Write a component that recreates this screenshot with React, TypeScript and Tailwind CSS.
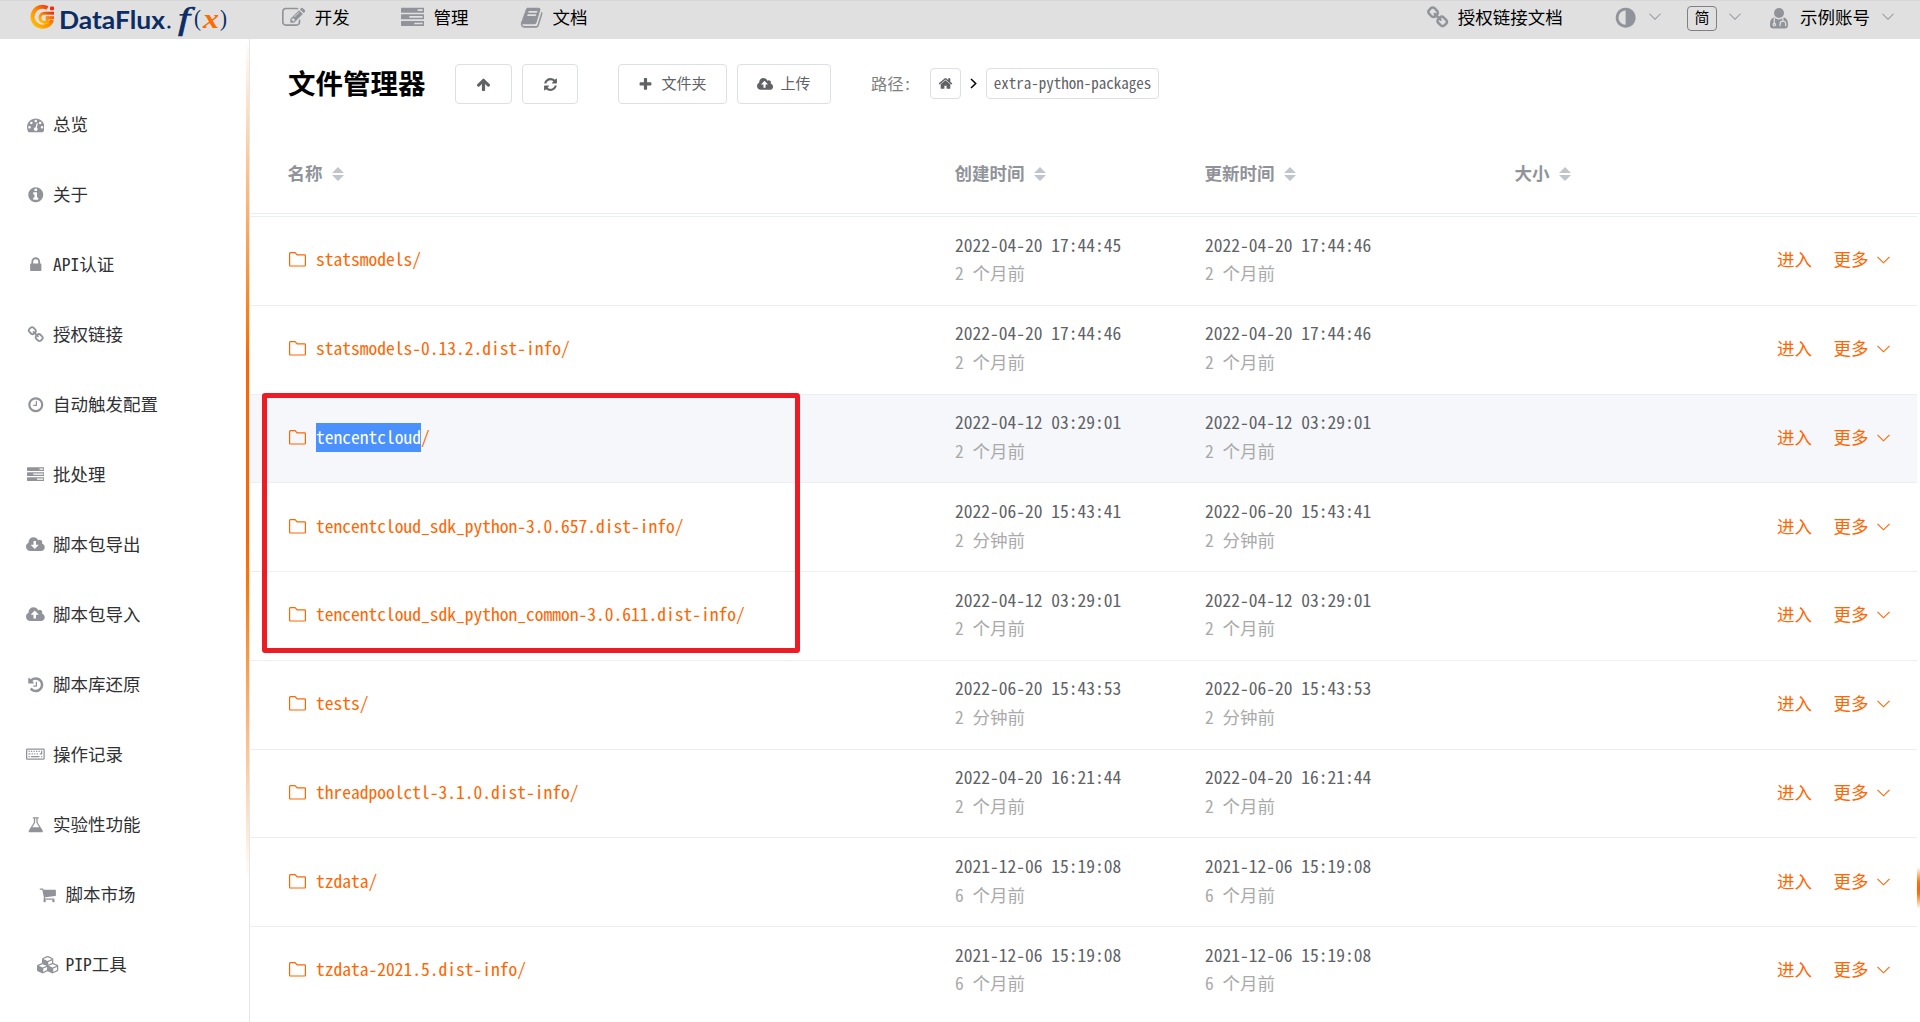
import React from "react";

const CIRCLE =
  "M1664 896q0 209-103 385.5t-279.5 279.5-385.5 103-385.5-103-279.5-279.5-103-385.5 103-385.5 279.5-279.5 385.5-103 385.5 103 279.5 279.5 103 385.5z";
const CLOUD =
  "M1920 1152q0 159-112.5 271.5t-271.5 112.5h-1088q-185 0-316.5-131.5t-131.5-316.5q0-130 70-240t188-165q-2-30-2-43 0-212 150-362t362-150q156 0 285.5 87t188.5 231q71-62 166-62 106 0 181 75t75 181q0 76-41 138 130 31 213.5 135.5t83.5 238.5z";

type Glyph = { w: number; d: string };

const GLYPHS = {
  dashboard: {
    w: 1792,
    d: "M384 1152q0-53-37.5-90.5t-90.5-37.5-90.5 37.5-37.5 90.5 37.5 90.5 90.5 37.5 90.5-37.5 37.5-90.5zm192-448q0-53-37.5-90.5t-90.5-37.5-90.5 37.5-37.5 90.5 37.5 90.5 90.5 37.5 90.5-37.5 37.5-90.5zm428 481l101-382q6-26-7.5-48.5t-38.5-29.5-48 6.5-30 39.5l-101 382q-60 5-107 43.5t-63 98.5q-20 77 20 146t117 89 146-20 89-117q16-60-6-117t-72-91zm660-33q0-53-37.5-90.5t-90.5-37.5-90.5 37.5-37.5 90.5 37.5 90.5 90.5 37.5 90.5-37.5 37.5-90.5zm-640-640q0-53-37.5-90.5t-90.5-37.5-90.5 37.5-37.5 90.5 37.5 90.5 90.5 37.5 90.5-37.5 37.5-90.5zm448 192q0-53-37.5-90.5t-90.5-37.5-90.5 37.5-37.5 90.5 37.5 90.5 90.5 37.5 90.5-37.5 37.5-90.5zm320 448q0 261-141 483-19 29-54 29h-1402q-35 0-54-29-141-221-141-483 0-182 71-348t191-286 286-191 348-71 348 71 286 191 191 286 71 348z",
  },
  info: {
    w: 1792,
    d:
      "M1152 1376v-160q0-14-9-23t-23-9h-96v-512q0-14-9-23t-23-9h-320q-14 0-23 9t-9 23v160q0 14 9 23t23 9h96v320h-96q-14 0-23 9t-9 23v160q0 14 9 23t23 9h448q14 0 23-9t9-23zm-128-896v-160q0-14-9-23t-23-9h-192q-14 0-23 9t-9 23v160q0 14 9 23t23 9h192q14 0 23-9t9-23z" +
      CIRCLE,
  },
  lock: {
    w: 1792,
    d: "M640 768h512v-192q0-106-75-181t-181-75-181 75-75 181v192zm832 96v576q0 40-28 68t-68 28h-960q-40 0-68-28t-28-68v-576q0-40 28-68t68-28h32v-192q0-184 132-316t316-132 316 132 132 316v192h32q40 0 68 28t28 68z",
  },
  link: {
    w: 1792,
    d: "M1520 1216q0-40-28-68l-208-208q-28-28-68-28-42 0-72 32 3 3 19 18.5t21.5 21.5 15 19 13 25.5 3.5 27.5q0 40-28 68t-68 28q-15 0-27.5-3.5t-25.5-13-19-15-21.5-21.5-18.5-19q-33 31-33 73 0 40 28 68l206 207q27 27 68 27 40 0 68-26l147-146q28-28 28-67zm-703-705q0-40-28-68l-206-207q-28-28-68-28-39 0-68 27l-147 146q-28 28-28 67 0 40 28 68l208 208q27 27 68 27 42 0 72-31-3-3-19-18.5t-21.5-21.5-15-19-13-25.5-3.5-27.5q0-40 28-68t68-28q15 0 27.5 3.5t25.5 13 19 15 21.5 21.5 18.5 19q33-31 33-73zm895 705q0 120-85 203l-147 146q-83 83-203 83-121 0-204-85l-206-207q-83-83-83-203 0-123 88-209l-88-88q-86 88-208 88-120 0-204-84l-208-208q-84-84-84-204t85-203l147-146q83-83 203-83 121 0 204 85l206 207q83 83 83 203 0 123-88 209l88 88q86-88 208-88 120 0 204 84l208 208q84 84 84 204z",
  },
  clock: {
    w: 1792,
    d: "M1024 544v448q0 14-9 23t-23 9h-320q-14 0-23-9t-9-23v-64q0-14 9-23t23-9h224v-352q0-14 9-23t23-9h64q14 0 23 9t9 23zm416 352q0-148-73-273t-198-198-273-73-273 73-198 198-73 273 73 273 198 198 273 73 273-73 198-198 73-273zm224 0q0 209-103 385.5t-279.5 279.5-385.5 103-385.5-103-279.5-279.5-103-385.5 103-385.5 279.5-279.5 385.5-103 385.5 103 279.5 279.5 103 385.5z",
  },
  adjust: {
    w: 1792,
    d: "M896 1440v-1088q-148 0-273 73t-198 198-73 273 73 273 198 198 273 73z" + CIRCLE,
  },
  tasks: {
    w: 1792,
    d: "M1024 1408h640v-128h-640v128zm-384-512h1024v-128h-1024v128zm640-512h384v-128h-384v128zm512 832v256q0 26-19 45t-45 19h-1664q-26 0-45-19t-19-45v-256q0-26 19-45t45-19h1664q26 0 45 19t19 45zm0-512v256q0 26-19 45t-45 19h-1664q-26 0-45-19t-19-45v-256q0-26 19-45t45-19h1664q26 0 45 19t19 45zm0-512v256q0 26-19 45t-45 19h-1664q-26 0-45-19t-19-45v-256q0-26 19-45t45-19h1664q26 0 45 19t19 45z",
  },
  cloudDown: {
    w: 1920,
    d:
      "M1280 928q0-14-9-23t-23-9h-224v-352q0-13-9.5-22.5t-22.5-9.5h-192q-13 0-22.5 9.5t-9.5 22.5v352h-224q-13 0-22.5 9.5t-9.5 22.5q0 14 9 23l352 352q9 9 23 9t23-9l351-351q10-12 10-24z" +
      CLOUD,
  },
  cloudUp: {
    w: 1920,
    d:
      "M1280 864q0-14-9-23l-352-352q-9-9-23-9t-23 9l-351 351q-10 12-10 24 0 14 9 23t23 9h224v352q0 13 9.5 22.5t22.5 9.5h192q13 0 22.5-9.5t9.5-22.5v-352h224q13 0 22.5-9.5t9.5-22.5z" +
      CLOUD,
  },
  history: {
    w: 1792,
    d: "M1664 896q0 156-61 298t-164 245-245 164-298 61q-172 0-327-72.5t-264-204.5q-7-10-6.5-22.5t8.5-20.5l137-138q10-9 25-9 16 2 23 12 73 95 179 147t225 52q104 0 198.5-40.5t163.5-109.5 109.5-163.5 40.5-198.5-40.5-198.5-109.5-163.5-163.5-109.5-198.5-40.5q-98 0-188 35.5t-160 101.5l137 138q31 30 14 69-17 40-59 40h-448q-26 0-45-19t-19-45v-448q0-42 40-59 39-17 69 14l130 129q107-101 244.5-156.5t284.5-55.5q156 0 298 61t245 164 164 245 61 298zm-640-288v448q0 14-9 23t-23 9h-320q-14 0-23-9t-9-23v-64q0-14 9-23t23-9h224v-352q0-14 9-23t23-9h64q14 0 23 9t9 23z",
  },
  keyboard: {
    w: 1920,
    d: "M128 256h1664q128 0 128 128v896q0 128-128 128h-1664q-128 0-128-128v-896q0-128 128-128zm0 128v896h1664v-896zM256 480h128v128h-128zM512 480h128v128h-128zM768 480h128v128h-128zM1024 480h128v128h-128zM1280 480h128v128h-128zM1536 480h128v384h-256v-128h128zM256 736h192v128h-192zM576 736h128v128h-128zM832 736h128v128h-128zM1088 736h128v128h-128zM256 1024h128v128h-128zM512 1024h864v128h-864zM1536 1024h128v128h-128z",
  },
  flask: {
    w: 1792,
    d: "M1591 1448q56 89 21.5 152.5t-140.5 63.5h-1152q-106 0-140.5-63.5t21.5-152.5l503-793v-399h-64q-26 0-45-19t-19-45 19-45 45-19h512q26 0 45 19t19 45-19 45-45 19h-64v399zm-779-725l-272 429h712l-272-429-20-31v-436h-128v436z",
  },
  cart: {
    w: 1792,
    d: "M704 1536q0 52-38 90t-90 38-90-38-38-90 38-90 90-38 90 38 38 90zm896 0q0 52-38 90t-90 38-90-38-38-90 38-90 90-38 90 38 38 90zm128-1088v512q0 24-16.5 42.5t-40.5 21.5l-1044 122q13 60 13 70 0 16-24 64h920q26 0 45 19t19 45-19 45-45 19h-1024q-26 0-45-19t-19-45q0-11 8-31.5t16-36 21.5-40 15.5-29.5l-177-823h-204q-26 0-45-19t-19-45 19-45 45-19h256q16 0 28.5 6.5t19.5 15.5 13 24.5 8 26 5.5 29.5 4.5 26h1201q26 0 45 19t19 45z",
  },
  cubes: {
    w: 2304,
    d: "M640 1632l384-192v-314l-384 164v342zm-64-454l404-173-404-173-404 173zm1088 454l384-192v-314l-384 164v342zm-64-454l404-173-404-173-404 173zm-448-293l384-165v-266l-384 164v267zm-64-379l441-189-441-189-441 189zm1088 518v416q0 36-19 67t-52 47l-448 224q-25 14-57 14t-57-14l-448-224q-4-2-7-4-2 2-7 4l-448 224q-25 14-57 14t-57-14l-448-224q-33-16-52-47t-19-67v-416q0-38 21.5-70t56.5-48l434-186v-400q0-38 21.5-70t56.5-48l448-192q23-10 50-10t50 10l448 192q35 16 56.5 48t21.5 70v400l434 186q36 16 57 48t21 70z",
  },
  edit: {
    w: 1792,
    d: "M888 1184l116-116-152-152-116 116v56h96v96h56zm440-720q-16-16-33 1l-350 350q-17 17-1 33t33-1l350-350q17-17 1-33zm80 594v190q0 119-84.5 203.5t-203.5 84.5h-832q-119 0-203.5-84.5t-84.5-203.5v-832q0-119 84.5-203.5t203.5-84.5h832q63 0 117 25 15 7 18 23 3 17-9 29l-49 49q-14 14-32 8-23-6-45-6h-832q-66 0-113 47t-47 113v832q0 66 47 113t113 47h832q66 0 113-47t47-113v-126q0-13 9-22l64-64q15-15 35-7t20 29zm-96-738l288 288-672 672h-288v-288zm444 132l-92 92-288-288 92-92q28-28 68-28t68 28l152 152q28 28 28 68t-28 68z",
  },
  book: {
    w: 1792,
    d: "M1703 478q40 57 18 129l-275 906q-19 64-76.5 107.5t-122.5 43.5h-923q-77 0-148.5-53.5t-99.5-131.5q-24-67-2-127 0-4 3-27t4-37q1-8-3-21.5t-3-19.5q2-11 8-21t16.5-23.5 16.5-23.5q23-38 45-91.5t30-91.5q3-10 .5-30t-.5-28q3-11 17-28t17-23q21-36 42-92t25-90q1-9-2.5-32t.5-28q4-13 22-30.5t22-22.5q19-26 42.5-84.5t27.5-96.5q1-8-3-25.5t-2-26.5q2-8 9-18t18-23 17-21q8-12 16.5-30.5t15-35 16-36 19.5-32 26.5-23.5 36-11.5 47.5 5.5l-1 3q38-9 51-9h761q74 0 114 56t18 130l-274 906q-36 119-71.5 153.5t-128.5 34.5h-869q-27 0-38 15-11 16-1 43 24 70 144 70h923q29 0 56-15.5t35-41.5l300-987q7-22 5-57 38 15 59 43zm-1064 2q-4 13 2 22.5t20 9.5h608q13 0 25.5-9.5t16.5-22.5l21-64q4-13-2-22.5t-20-9.5h-608q-13 0-25.5 9.5t-16.5 22.5zm-83 256q-4 13 2 22.5t20 9.5h608q13 0 25.5-9.5t16.5-22.5l21-64q4-13-2-22.5t-20-9.5h-608q-13 0-25.5 9.5t-16.5 22.5z",
  },
  arrowUp: {
    w: 1792,
    d: "M1675 971q0 51-37 90l-75 75q-38 38-91 38-54 0-90-38l-294-293v704q0 52-37.5 84.5t-90.5 32.5h-128q-53 0-90.5-32.5t-37.5-84.5v-704l-294 293q-36 38-90 38t-90-38l-75-75q-38-38-38-90 0-53 38-91l651-651q35-37 90-37 54 0 91 37l651 651q37 39 37 91z",
  },
  refresh: {
    w: 1792,
    d: "M1639 1056q0 5-1 7-64 268-268 434.5t-478 166.5q-146 0-282.5-55t-243.5-157l-129 129q-19 19-45 19t-45-19-19-45v-448q0-26 19-45t45-19h448q26 0 45 19t19 45-19 45l-137 137q71 66 161 102t187 36q134 0 250-65t186-179q11-17 53-117 8-23 30-23h192q13 0 22.5 9.5t9.5 22.5zm25-800v448q0 26-19 45t-45 19h-448q-26 0-45-19t-19-45 19-45l138-138q-148-137-349-137-134 0-250 65t-186 179q-11 17-53 117-8 23-30 23h-199q-13 0-22.5-9.5t-9.5-22.5v-7q65-268 270-434.5t480-166.5q146 0 284 55.5t245 156.5l130-129q19-19 45-19t45 19 19 45z",
  },
  plus: {
    w: 1792,
    d: "M1600 736v192q0 40-28 68t-68 28h-416v416q0 40-28 68t-68 28h-192q-40 0-68-28t-28-68v-416h-416q-40 0-68-28t-28-68v-192q0-40 28-68t68-28h416v-416q0-40 28-68t68-28h192q40 0 68 28t28 68v416h416q40 0 68 28t28 68z",
  },
  home: {
    w: 1792,
    d: "M1472 992v480q0 26-19 45t-45 19h-384v-384h-256v384h-384q-26 0-45-19t-19-45v-480q0-1 .5-3t.5-3l575-474 575 474q1 2 1 6zm223-69l-62 74q-8 9-21 11h-3q-13 0-21-7l-692-577-692 577q-12 8-24 7-13-2-21-11l-62-74q-8-10-7-23.5t11-21.5l719-599q32-26 76-26t76 26l244 204v-195q0-14 9-23t23-9h192q14 0 23 9t9 23v408l219 182q10 8 11 21.5t-7 23.5z",
  },
} satisfies Record<string, Glyph>;

type GlyphName = keyof typeof GLYPHS;

function Icon({ name, size, className = "" }: { name: GlyphName; size: number; className?: string }) {
  const g = GLYPHS[name];
  return (
    <svg
      viewBox={`0 0 ${g.w} 1792`}
      width={(size * g.w) / 1792}
      height={size}
      fill="currentColor"
      fillRule="evenodd"
      className={`shrink-0 ${className}`}
    >
      <path d={g.d} />
    </svg>
  );
}

function DoctorIcon() {
  return (
    <svg viewBox="0 0 18 21" width="18" height="21" className="shrink-0" fill="#909399">
      <circle cx="9" cy="5" r="5" />
      <path d="M4.3 9.6C1.5 10 0 12.6 0 16.4v1.4C0 19.600 1.200 20.500 3 20.500h12c1.800 0 3-.9 3-2.700v-1.400c0-3.800-1.500-6.400-4.300-6.800C12.500 10.700 10.900 11.400 9 11.400S5.500 10.700 4.300 9.600z" />
      <g fill="none" stroke="#e0e0e0" strokeWidth="1.200">
        <path d="M4.300 10v5.200" />
        <circle cx="4.300" cy="16.600" r="1.200" />
        <path d="M12.900 10v3.200M10.100 18.200v-2.300a2.800 2.800 0 0 1 5.600 0v2.300" />
      </g>
    </svg>
  );
}

function Chevron({ className = "", size = 13 }: { className?: string; size?: number }) {
  return (
    <svg viewBox="0 0 13 8" width={size} height={(size * 8) / 13} className={`shrink-0 ${className}`} fill="none" stroke="currentColor" strokeWidth="1.100">
      <path d="M.5 .8l6 6 6-6" />
    </svg>
  );
}

function FolderIcon() {
  return (
    <svg viewBox="0 0 17 15" width="17" height="15" className="mt-px ml-[0.500px] shrink-0" fill="none" stroke="currentColor" strokeWidth="1.200" strokeLinejoin="round">
      <path d="M.6 13.200V1.400q0-.8.8-.8h4.700l2 2.300h7.500q.8 0 .8.8v9.500q0 .8-.8.8H1.400q-.8 0-.8-.8z" />
    </svg>
  );
}

function SortIcon() {
  return (
    <svg viewBox="0 0 12 14" width="12" height="14" className="ml-[9px] shrink-0" fill="#c0c4cc">
      <path d="M6 0l6 6H0zM6 14l6-6H0z" />
    </svg>
  );
}

function Logo() {
  return (
    <svg viewBox="0 0 200 38" width="200" height="38" className="shrink-0">
      <defs>
        <linearGradient id="mark" x1="0" y1="1" x2="1" y2="0">
          <stop offset="0" stopColor="#ffc400" />
          <stop offset=".5" stopColor="#ff8a00" />
          <stop offset="1" stopColor="#ee2a10" />
        </linearGradient>
      </defs>
      <g fill="none" stroke="url(#mark)" strokeWidth="4">
        <path d="M17.500 7A10 10 0 1 0 22 19" />
        <path d="M24 12.200H14.500a4.600 4.600 0 0 0 0 9.200h2.700v-4.600H24" strokeWidth="3" />
      </g>
      <rect x="20" y="5.500" width="4" height="3.800" rx="1" fill="#ee2a10" />
      <g fill="#0b2d64">
        <text x="29" y="27.500" fontFamily="Lato, sans-serif" fontWeight="700" fontSize="25" textLength="106" lengthAdjust="spacingAndGlyphs">
          DataFlux
        </text>
        <circle cx="139" cy="26" r="1.600" />
        <text x="148" y="27.500" fontFamily="Liberation Serif, serif" fontStyle="italic" fontSize="32" stroke="#0b2d64" strokeWidth=".6" textLength="12" lengthAdjust="spacingAndGlyphs">
          f
        </text>
        <text x="164" y="25" fontFamily="Liberation Serif, serif" fontSize="24" textLength="7" lengthAdjust="spacingAndGlyphs">
          (
        </text>
        <text x="190" y="25" fontFamily="Liberation Serif, serif" fontSize="24" textLength="7" lengthAdjust="spacingAndGlyphs">
          )
        </text>
      </g>
      <text x="173" y="27" fontFamily="Liberation Serif, serif" fontStyle="italic" fontWeight="700" fontSize="27" fill="#ff6a00" textLength="16" lengthAdjust="spacingAndGlyphs">
        x
      </text>
    </svg>
  );
}

const NAV: { icon: GlyphName; label: string; left: string }[] = [
  { icon: "edit", label: "开发", left: "ml-px" },
  { icon: "tasks", label: "管理", left: "ml-[51px]" },
  { icon: "book", label: "文档", left: "ml-[51px]" },
];

const SIDE: { icon: GlyphName; label: string; sub?: boolean }[] = [
  { icon: "dashboard", label: "总览" },
  { icon: "info", label: "关于" },
  { icon: "lock", label: "API认证" },
  { icon: "link", label: "授权链接" },
  { icon: "clock", label: "自动触发配置" },
  { icon: "tasks", label: "批处理" },
  { icon: "cloudDown", label: "脚本包导出" },
  { icon: "cloudUp", label: "脚本包导入" },
  { icon: "history", label: "脚本库还原" },
  { icon: "keyboard", label: "操作记录" },
  { icon: "flask", label: "实验性功能" },
  { icon: "cart", label: "脚本市场", sub: true },
  { icon: "cubes", label: "PIP工具", sub: true },
];

type Row = { name: string; created: string; updated: string; ago: string; active?: boolean };

const ROWS: Row[] = [
  { name: "statsmodels/", created: "2022-04-20 17:44:45", updated: "2022-04-20 17:44:46", ago: "2 个月前" },
  { name: "statsmodels-0.13.2.dist-info/", created: "2022-04-20 17:44:46", updated: "2022-04-20 17:44:46", ago: "2 个月前" },
  { name: "tencentcloud/", created: "2022-04-12 03:29:01", updated: "2022-04-12 03:29:01", ago: "2 个月前", active: true },
  { name: "tencentcloud_sdk_python-3.0.657.dist-info/", created: "2022-06-20 15:43:41", updated: "2022-06-20 15:43:41", ago: "2 分钟前" },
  { name: "tencentcloud_sdk_python_common-3.0.611.dist-info/", created: "2022-04-12 03:29:01", updated: "2022-04-12 03:29:01", ago: "2 个月前" },
  { name: "tests/", created: "2022-06-20 15:43:53", updated: "2022-06-20 15:43:53", ago: "2 分钟前" },
  { name: "threadpoolctl-3.1.0.dist-info/", created: "2022-04-20 16:21:44", updated: "2022-04-20 16:21:44", ago: "2 个月前" },
  { name: "tzdata/", created: "2021-12-06 15:19:08", updated: "2021-12-06 15:19:08", ago: "6 个月前" },
  { name: "tzdata-2021.5.dist-info/", created: "2021-12-06 15:19:08", updated: "2021-12-06 15:19:08", ago: "6 个月前" },
];

const COLS = "grid grid-cols-[667px_250px_310px_1fr]";
const BTN = "flex h-10 items-center justify-center rounded-[4px] border border-[#dcdfe6] text-[15px] text-[#606266]";

function TimeCell({ time, ago }: { time: string; ago: string }) {
  return (
    <div className="flex flex-col leading-[28.75px]">
      <span className="text-[#606266]">{time}</span>
      <span className="text-[#aaaaaa]">{ago}</span>
    </div>
  );
}

export default function App() {
  return (
    <div className="relative flex h-[1022px] w-[1920px] flex-col overflow-hidden bg-white font-['Noto_Sans_Mono_CJK_SC','Noto_Sans_CJK_SC',monospace] text-[17.5px] font-light whitespace-pre">
      <header className="flex h-[39px] shrink-0 items-center border-t border-[#d6d6d6] bg-[#e0e0e0] text-black">
        <div className="flex w-[281px] pl-[30px]">
          <Logo />
        </div>
        {NAV.map((n) => (
          <div key={n.label} className={`flex items-center ${n.left}`}>
            <Icon name={n.icon} size={23.3} className="-mt-1 mr-[9.500px] text-[#909399]" />
            <span className="-mt-1.5">{n.label}</span>
          </div>
        ))}
        <div className="-mt-1 ml-auto flex items-center pr-[26px]">
          <Icon name="link" size={23.3} className="mr-[8.500px] text-[#909399]" />
          <span className="-mt-0.5">授权链接文档</span>
          <Icon name="adjust" size={23.3} className="ml-[51px] text-[#909399]" />
          <Chevron size={12} className="-mt-0.5 ml-[12px] text-[#909399]" />
          <span className="ml-[26px] flex h-[25px] w-[30px] items-center justify-center rounded-[4px] border border-[#808080] pb-0.5 text-[15px]">简</span>
          <Chevron size={12} className="-mt-0.5 ml-[12px] text-[#909399]" />
          <span className="mr-[12px] ml-[29px] flex">
            <DoctorIcon />
          </span>
          <span className="-mt-0.5">示例账号</span>
          <Chevron size={12} className="-mt-0.5 ml-[12px] text-[#909399]" />
        </div>
      </header>

      <div className="flex min-h-0 flex-1">
        <aside className="flex w-[250px] shrink-0 border-r border-[#e4e7ed]">
          <nav className="flex flex-1 flex-col pt-[51px]">
            {SIDE.map((s) => (
              <div key={s.label} className={`flex h-[70px] shrink-0 items-center text-[#303133] ${s.sub ? "pl-[36px]" : "pl-[23.500px]"}`}>
                <span className="mr-[5.500px] flex w-6 justify-center text-[#909399]">
                  <Icon name={s.icon} size={17.5} />
                </span>
                <span className="-mt-0.5">{s.label}</span>
              </div>
            ))}
          </nav>
          <div className="h-[841px] w-[3px] bg-[linear-gradient(to_bottom,#ff770000_0%,#ff7700_35%,#ff6600_38%,#ff6600_60%,#ff7700_65%,#ff770000_100%)]" />
        </aside>

        <main className="flex min-w-0 flex-1 flex-col">
          <div className="flex h-[90px] shrink-0 items-center pl-[38px]">
            <h1 className="-mt-[3px] w-[167px] text-[27.5px] font-bold text-black">文件管理器</h1>
            <div className={`${BTN} w-[57px]`}>
              <Icon name="arrowUp" size={15} />
            </div>
            <div className={`${BTN} ml-[10px] w-[56px]`}>
              <Icon name="refresh" size={15} />
            </div>
            <div className={`${BTN} ml-[40px] w-[109px] gap-[8px]`}>
              <Icon name="plus" size={15} />
              <span className="-mt-0.5">文件夹</span>
            </div>
            <div className={`${BTN} ml-[10px] w-[94px] gap-[7px]`}>
              <Icon name="cloudUp" size={15} />
              <span className="-mt-0.5">上传</span>
            </div>
            <span className="-mt-0.5 ml-[40px] w-[59px] text-[16.25px] text-[#808080]">路径:</span>
            <span className="-mt-px flex h-[31px] w-[31px] items-center justify-center rounded-[4px] border border-[#dcdfe6] text-[#606266]">
              <Icon name="home" size={15} />
            </span>
            <svg viewBox="0 0 7 11" width="7" height="11" className="-mt-0.5 mr-[9px] ml-[9px]" fill="none" stroke="#000" strokeWidth="1.500">
              <path d="M1 1l4.700 4.500L1 10" />
            </svg>
            <span className="-mt-px flex h-[31px] w-[173px] items-center justify-center rounded-[4px] border border-[#dcdfe6] pb-px text-[15px] font-normal text-[#606266]">
              extra-python-packages
            </span>
          </div>

          <div className={`${COLS} h-[85px] shrink-0 items-center border-b border-[#ebeef5] pt-[5px] pl-[37.500px] font-bold text-[#909399]`}>
            <div className="flex items-center">
              名称
              <SortIcon />
            </div>
            <div className="flex items-center">
              创建时间
              <SortIcon />
            </div>
            <div className="flex items-center">
              更新时间
              <SortIcon />
            </div>
            <div className="flex items-center">
              大小
              <SortIcon />
            </div>
          </div>

          <div className="mt-[2px] mr-[3px] flex flex-col border-t border-[#ebeef5]">
            {ROWS.map((r) => (
              <div
                key={r.name}
                className={`${COLS} h-[88.750px] shrink-0 items-center border-b border-[#ebeef5] pb-[3px] pl-[38px] last:border-transparent ${r.active ? "bg-[#f5f7fa]" : ""}`}
              >
                <div className="flex items-center text-[#ff6600]">
                  <FolderIcon />
                  {r.active ? (
                    <span className="mt-[2px] ml-[10.500px] flex leading-[27px]">
                      <span className="bg-[#4a90ff] pb-[2px] font-normal text-white">{r.name.slice(0, -1)}</span>/
                    </span>
                  ) : (
                    <span className="ml-[10.500px]">{r.name}</span>
                  )}
                </div>
                <TimeCell time={r.created} ago={r.ago} />
                <TimeCell time={r.updated} ago={r.ago} />
                <div className="flex items-center justify-end pr-[27px] text-[#ff6600]">
                  <span>进入</span>
                  <span className="ml-[21.500px]">更多</span>
                  <Chevron className="mt-[2px] ml-[8.500px]" />
                </div>
              </div>
            ))}
          </div>
        </main>
      </div>

      <div className="absolute top-[393px] left-[262px] h-[260px] w-[538px] rounded-[3px] border-[5px] border-[#ed1c24]" />
      <div className="absolute top-[867px] right-0 h-[42px] w-[3px] bg-[linear-gradient(to_bottom,#ff770000_0%,#ff7700_35%,#ff6600_45%,#ff6600_55%,#ff7700_65%,#ff770000_100%)]" />
    </div>
  );
}
